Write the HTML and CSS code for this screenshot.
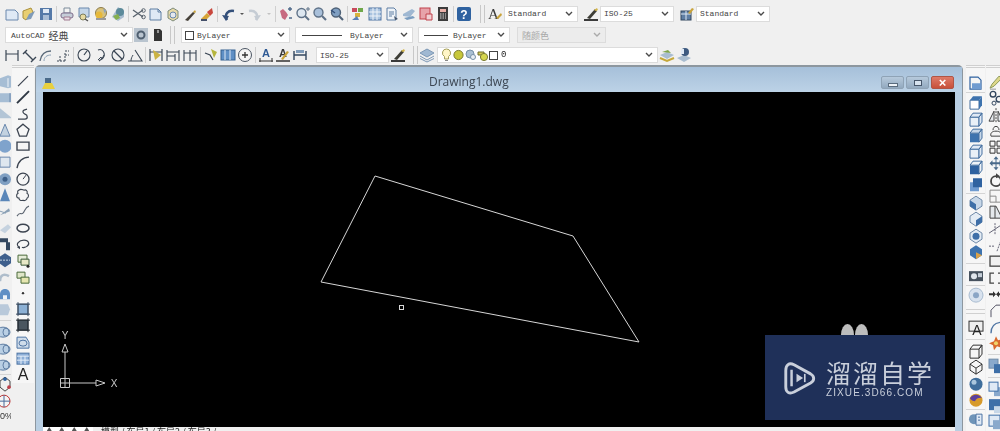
FILE: index.html
```html
<!DOCTYPE html>
<html lang="zh">
<head>
    <meta charset="UTF-8">
    <title>Drawing1.dwg</title>
    <link rel="stylesheet" href="styles.css">
</head>
<body>
    <svg class="defs" width="0" height="0">
        <symbol id="chev" viewBox="0 0 8 6"><path d="M1 1l3 3 3-3" fill="none" stroke="#4a4a4a" stroke-width="1.4"/></symbol>
        <symbol id="new" viewBox="0 0 16 16"><path d="M2 4h9l3 3v7H2z" fill="#dfe9f5" stroke="#6a88ad"/></symbol>
        <symbol id="open" viewBox="0 0 16 16"><path d="M2 5l8-3 2 4-7 8-3-2z" fill="#e9cf72" stroke="#a98f3c"/><path d="M8 8l6-3-4 8-5 1z" fill="#7f9bb9"/></symbol>
        <symbol id="docmark" viewBox="0 0 16 16"><path d="M5 3h6v5H5z" fill="#4a6a8a"/><path d="M2 14l3-6h7l3 6z" fill="#e8cf3f"/></symbol>
        <symbol id="save" viewBox="0 0 16 16"><rect x="2" y="2" width="12" height="12" fill="#5579a8"/><rect x="5" y="3" width="6" height="4" fill="#dfe9f5"/><rect x="5" y="9" width="6" height="5" fill="#a9bdd6"/></symbol>
        <symbol id="print" viewBox="0 0 16 16"><path d="M5 2h6v5H5z" fill="#f3f3f3" stroke="#7d8b9a"/><rect x="2" y="7" width="12" height="5" rx="2" fill="#c5cdd8" stroke="#7d6b8a"/><path d="M5 11h6v3H5z" fill="#eadfe8" stroke="#a07a90"/></symbol>
        <symbol id="preview" viewBox="0 0 16 16"><path d="M3 2h10v9H3z" fill="#c5d6e8" stroke="#6a88ad"/><circle cx="7" cy="11" r="3" fill="#e6d9a0" stroke="#7d7d5d"/><path d="M9 13l3 2" stroke="#555" stroke-width="1.4"/></symbol>
        <symbol id="publish" viewBox="0 0 16 16"><circle cx="8" cy="7" r="5.5" fill="#d9c27a" stroke="#8a7a4a"/><circle cx="6" cy="9" r="3.5" fill="#e6b83a"/><path d="M10 3l3 1-1 4z" fill="#8aa5c5"/><path d="M3 13h10" stroke="#9a9a9a" stroke-width="2"/></symbol>
        <symbol id="dwf" viewBox="0 0 16 16"><path d="M8 1l6 4v6l-6 4-6-4z" fill="#a9bdd0"/><circle cx="10" cy="6" r="4" fill="#5c8a9a"/><path d="M3 10l5-2 2 4-4 2z" fill="#86b04e"/></symbol>
        <symbol id="cut" viewBox="0 0 16 16"><path d="M2 4l10 7M2 11l10-7" stroke="#59636e" stroke-width="1.3"/><circle cx="12.5" cy="4.5" r="1.8" fill="none" stroke="#59636e"/><circle cx="12.5" cy="11" r="1.8" fill="none" stroke="#59636e"/></symbol>
        <symbol id="copy" viewBox="0 0 16 16"><path d="M2 3h8l3 3v8H2z" fill="#dfe9f5" stroke="#5f7ea3"/><path d="M10 3v3h3" fill="none" stroke="#5f7ea3"/></symbol>
        <symbol id="paste" viewBox="0 0 16 16"><path d="M3 5l5-3 5 3v7l-5 3-5-3z" fill="#e7d9a8" stroke="#7d8b7a"/><circle cx="8" cy="9" r="3" fill="#e4e8ee" stroke="#6a88ad"/></symbol>
        <symbol id="brush" viewBox="0 0 16 16"><path d="M3 14l8-8 2 1-7 8z" fill="#47423a"/><path d="M11 6l2-2 1 2-1 1z" fill="#c9a33a"/></symbol>
        <symbol id="block" viewBox="0 0 16 16"><path d="M2 13l6-6 3 3-4 4z" fill="#d6a437"/><path d="M8 6l5-4 1 5-3 3z" fill="#c8473c"/><path d="M2 14h6" stroke="#44506a" stroke-width="2"/></symbol>
        <symbol id="undo" viewBox="0 0 16 16"><path d="M7 14c-3-6 1-10 7-9" fill="none" stroke="#34507a" stroke-width="2.4"/><path d="M2 9l7 1-3 5z" fill="#34507a"/></symbol>
        <symbol id="redo" viewBox="0 0 16 16"><path d="M9 14c3-6-1-10-7-9" fill="none" stroke="#c5ccd4" stroke-width="2.4"/><path d="M14 9l-7 1 3 5z" fill="#c5ccd4"/></symbol>
        <symbol id="dot" viewBox="0 0 8 16"><path d="M2 7h4l-2 2z" fill="#555"/></symbol>
        <symbol id="dotoff" viewBox="0 0 8 16"><path d="M2 7h4l-2 2z" fill="#c2c2c2"/></symbol>
        <symbol id="pan" viewBox="0 0 16 16"><path d="M2 5l3-2 3 3 2 3-3 5-3-2z" fill="#c76a80"/><path d="M10 3h4M12 1v4M11 12h3" stroke="#4f6a8a" stroke-width="1.4"/></symbol>
        <symbol id="zoomp" viewBox="0 0 16 16"><circle cx="6.5" cy="7" r="4.5" fill="#dde7f0" stroke="#5f7288" stroke-width="1.4"/><path d="M10 10l4 4" stroke="#5f7288" stroke-width="2"/><path d="M11 3h4M13 1v4" stroke="#5f7288"/></symbol>
        <symbol id="zoomw" viewBox="0 0 16 16"><circle cx="6.5" cy="6.5" r="4.5" fill="#a9c0da" stroke="#5f7288" stroke-width="1.4"/><path d="M10 10l4 4" stroke="#5f7288" stroke-width="2.2"/></symbol>
        <symbol id="zoomb" viewBox="0 0 16 16"><circle cx="7" cy="6.5" r="4.5" fill="#7f9fc2" stroke="#4f6278" stroke-width="1.4"/><path d="M10 10l4 4" stroke="#4f6278" stroke-width="2.2"/><path d="M2 4l4 3" stroke="#34507a" stroke-width="1.4"/></symbol>
        <symbol id="props" viewBox="0 0 16 16"><rect x="2" y="2" width="5" height="4" fill="#c94b5c"/><rect x="8" y="2" width="5" height="4" fill="#6fa84a"/><rect x="5" y="7" width="5" height="4" fill="#d9b23c"/><path d="M2 14l5-4 2 4z" fill="#5a7fb5"/></symbol>
        <symbol id="grid" viewBox="0 0 16 16"><rect x="2" y="2" width="12" height="12" fill="#a9c3df" stroke="#4f75a4"/><path d="M6 2v12M10 2v12M2 6h12M2 10h12" stroke="#eef3f8"/></symbol>
        <symbol id="tools" viewBox="0 0 16 16"><path d="M3 2h7l2 2v10H3z" fill="#eef3f8" stroke="#5f7ea3"/><path d="M5 6h5M5 8h5M5 10h3" stroke="#5f7ea3"/><path d="M10 10l4 3-3 1z" fill="#44546a"/></symbol>
        <symbol id="sheet" viewBox="0 0 16 16"><path d="M2 8l9-5 3 2-5 6-7-1z" fill="#9fb8d2"/><path d="M3 12l9-2 2 2-8 2z" fill="#7a9dc0"/></symbol>
        <symbol id="markup" viewBox="0 0 16 16"><rect x="2" y="2" width="10" height="11" fill="#e7a3aa" stroke="#c0404a"/><path d="M8 8h6v6H8z" fill="#f0d0d4" stroke="#c0404a"/></symbol>
        <symbol id="calc" viewBox="0 0 16 16"><rect x="3" y="1" width="10" height="14" fill="#3c3c3c"/><rect x="5" y="3" width="6" height="3" fill="#e8b0a8"/><path d="M5 8h6M5 10h6M5 12h6" stroke="#ddd" stroke-dasharray="1.5 1"/></symbol>
        <symbol id="dimst" viewBox="0 0 16 16"><path d="M1 14h14" stroke="#3a3a3a" stroke-width="2"/><path d="M4 12l8-9 2 2-7 8z" fill="#3d3d36"/><path d="M11 4l3-2 1 2-2 1z" fill="#d3b54a"/></symbol>
        <symbol id="tblst" viewBox="0 0 16 16"><rect x="2" y="5" width="10" height="9" fill="#5f7ea3" stroke="#33475f"/><path d="M2 8h10M7 5v9" stroke="#dfe9f5"/><path d="M9 7l4-5 2 1-4 5z" fill="#c9a33a"/></symbol>
        <symbol id="wsgear" viewBox="0 0 16 16"><rect x="1" y="1" width="14" height="14" fill="#b9c4cf"/><circle cx="8" cy="8" r="3.5" fill="none" stroke="#4f5f70" stroke-width="2"/></symbol>
        <symbol id="wssave" viewBox="0 0 16 16"><path d="M4 2h6l2 2v10H4z" fill="#333"/><path d="M7 3h2v3H7z" fill="#999"/></symbol>
        <symbol id="dlin" viewBox="0 0 16 16"><path d="M2 3v11M14 3v11M2 7h12" fill="none" stroke="#3a4654" stroke-width="1.2"/></symbol>
        <symbol id="dali" viewBox="0 0 16 16"><path d="M2 7l4-4M10 15l5-5M4 5l8 8" fill="none" stroke="#3a4654" stroke-width="1.4"/></symbol>
        <symbol id="darc" viewBox="0 0 16 16"><path d="M2 14c1-6 5-10 11-10" fill="none" stroke="#5a6a7a" stroke-width="1.3"/><path d="M6 14c0-4 3-6 7-6" fill="none" stroke="#8aa0b5"/></symbol>
        <symbol id="dord" viewBox="0 0 16 16"><path d="M2 14h8M10 14V5M5 14V8M10 8h4M10 4h4" fill="none" stroke="#3a4654" stroke-dasharray="2 1"/></symbol>
        <symbol id="drad" viewBox="0 0 16 16"><circle cx="8" cy="8" r="6" fill="none" stroke="#3a4654" stroke-width="1.1"/><path d="M8 8l3-4" stroke="#3a4654" stroke-width="1.2"/></symbol>
        <symbol id="djog" viewBox="0 0 16 16"><path d="M5 3c5-2 8 4 5 8-1 1-3 2-4 3" fill="none" stroke="#3a4654" stroke-width="1.1"/><path d="M5 13l3-3 1 2 2-4" fill="none" stroke="#3a4654"/></symbol>
        <symbol id="ddia" viewBox="0 0 16 16"><circle cx="8" cy="8" r="6" fill="none" stroke="#3a4654" stroke-width="1.1"/><path d="M4 4l8 8" stroke="#3a4654" stroke-width="1.2"/></symbol>
        <symbol id="dang" viewBox="0 0 16 16"><path d="M1 14h14L8 3" fill="none" stroke="#3a4654" stroke-width="1.1"/><path d="M4 14c0-3 1-4 2-6" fill="none" stroke="#3a4654"/></symbol>
        <symbol id="dq" viewBox="0 0 16 16"><path d="M2 2v12M14 2v12M2 5h12" stroke="#3a4654" stroke-width="1.2"/><path d="M5 3l8 5-6 5z" fill="#cbb343"/></symbol>
        <symbol id="dbase" viewBox="0 0 16 16"><path d="M2 3v11M14 3v11M2 5h12M2 9h8M10 7v7" fill="none" stroke="#3a4654" stroke-width="1.1"/></symbol>
        <symbol id="dcont" viewBox="0 0 16 16"><path d="M2 3v11M8 3v11M14 3v11M2 6h12" fill="none" stroke="#3a4654" stroke-width="1.1"/></symbol>
        <symbol id="dlead" viewBox="0 0 16 16"><path d="M2 6l5 2 3 5" fill="none" stroke="#3a4654" stroke-width="1.3"/><path d="M8 2l6 3-3 6z" fill="#b5b53e"/></symbol>
        <symbol id="dtol" viewBox="0 0 16 16"><rect x="1" y="3" width="14" height="10" fill="#5f8fc5" stroke="#35608f"/><path d="M5 3v10M10 3v10" stroke="#dfe9f5"/></symbol>
        <symbol id="dcen" viewBox="0 0 16 16"><circle cx="8" cy="8" r="6.5" fill="#f4f4f4" stroke="#4a5462"/><path d="M5 8h6M8 5v6" stroke="#333" stroke-width="1.3"/></symbol>
        <symbol id="dup" viewBox="0 0 16 16"><path d="M2 4v9M14 4v9M2 8h12" stroke="#33475f" stroke-width="1.4"/><path d="M4 3h8v3H4z" fill="#7f9bb9"/></symbol>
        <symbol id="layers" viewBox="0 0 16 16"><path d="M1 6l7-4 7 4-7 4z" fill="#9fb8d2" stroke="#7c97b4"/><path d="M1 9l7 4 7-4M1 11.500l7 3.500 7-3.500" fill="none" stroke="#7c97b4"/></symbol>
        <symbol id="layprev" viewBox="0 0 16 16"><path d="M1 8l7-3 7 3-7 4z" fill="#a9bdd0"/><path d="M1 11l7 3 7-3" fill="none" stroke="#c5a83a" stroke-width="2"/><path d="M3 5l6-2 3 3" fill="#7ea54a"/></symbol>
        <symbol id="laystat" viewBox="0 0 16 16"><path d="M1 11l7-3 7 3-7 4z" fill="#a9bdd0"/><circle cx="9" cy="5" r="4" fill="#3d5a80"/><path d="M5 2h3v5H5z" fill="#dfe9f5"/></symbol>
        <symbol id="bulb" viewBox="0 0 11 14"><path d="M5.500 1a4 4 0 0 1 2 7.500V11h-4V8.500a4 4 0 0 1 2-7.500z" fill="#fff6c7" stroke="#a6a05c"/><path d="M4 12.500h3" stroke="#888"/></symbol>
        <symbol id="sun" viewBox="0 0 11 14"><circle cx="5.500" cy="7" r="4.600" fill="#c7c73a" stroke="#7c7c33"/></symbol>
        <symbol id="lock" viewBox="0 0 11 14"><circle cx="5" cy="6" r="4" fill="#a9bfd3" stroke="#7690a7"/><circle cx="8" cy="9" r="2.500" fill="#e8eef4" stroke="#7690a7"/></symbol>
        <symbol id="printl" viewBox="0 0 11 14"><path d="M1 4h6v3H1z" fill="#d6cc56" stroke="#6d6d33"/><circle cx="7" cy="9" r="3.600" fill="#d6d64e" stroke="#7c7c33"/></symbol>
        <symbol id="ln" viewBox="0 0 16 16"><path d="M3 13L13 3" stroke="#3c4450" stroke-width="1.3"/></symbol>
        <symbol id="xln" viewBox="0 0 16 16"><path d="M2 14L14 2" stroke="#2f3844" stroke-width="2"/></symbol>
        <symbol id="pln" viewBox="0 0 16 16"><path d="M3 13h7c3 0 3-4 0-5-2-1-3-3-1-4l3-1" fill="none" stroke="#3c4450" stroke-width="1.3"/></symbol>
        <symbol id="pgon" viewBox="0 0 16 16"><path d="M8 2l6 5-2.500 7h-7L2 7z" fill="none" stroke="#3c4450" stroke-width="1.3"/></symbol>
        <symbol id="rect" viewBox="0 0 16 16"><path d="M2 4h12v8H2z" fill="#f5f5f5" stroke="#3c4450" stroke-width="1.4"/></symbol>
        <symbol id="arc" viewBox="0 0 16 16"><path d="M2 14C3 7 8 3 14 3" fill="none" stroke="#3c4450" stroke-width="1.4"/></symbol>
        <symbol id="circ" viewBox="0 0 16 16"><circle cx="8" cy="8" r="6" fill="none" stroke="#3c4450" stroke-width="1.3"/><path d="M8 8l3-4" stroke="#3c4450"/></symbol>
        <symbol id="cloud" viewBox="0 0 16 16"><path d="M4 3c2-2 4 0 5 0 2-1 4 1 3 3 2 1 2 4 0 5 0 2-3 3-4 2-2 1-4 0-4-2-3 0-3-4-1-5-1-1 0-3 1-3z" fill="none" stroke="#3c4450" stroke-width="1.1"/></symbol>
        <symbol id="spl" viewBox="0 0 16 16"><path d="M2 13c3-5 4-1 6-3s2-6 6-7" fill="none" stroke="#5b6470" stroke-width="1.1"/></symbol>
        <symbol id="ell" viewBox="0 0 16 16"><ellipse cx="8" cy="8" rx="6" ry="3.800" fill="none" stroke="#3c4450" stroke-width="1.5"/></symbol>
        <symbol id="ella" viewBox="0 0 16 16"><path d="M4 11C0 8 4 4 9 4s6 4 3 6c-1 1-4 2-5 1" fill="none" stroke="#3c4450" stroke-width="1.2"/><path d="M2 11l3 2 0-3z" fill="#3c4450"/></symbol>
        <symbol id="ins" viewBox="0 0 16 16"><path d="M3 3h9v7H3z" fill="#e6ecd8" stroke="#4a6a3a"/><path d="M6 7h8v6H6z" fill="#e8e8c6" stroke="#3c5a3a"/><circle cx="13" cy="14" r="1.500" fill="#222"/></symbol>
        <symbol id="mkb" viewBox="0 0 16 16"><path d="M2 3h8v6H2z" fill="#dfe6c8" stroke="#4a6a3a"/><path d="M6 8h8v6H6z" fill="#e6e6b0" stroke="#4a6a3a"/></symbol>
        <symbol id="pt" viewBox="0 0 16 16"><circle cx="8" cy="8" r="1.200" fill="#333"/></symbol>
        <symbol id="hat" viewBox="0 0 16 16"><rect x="3" y="3" width="10" height="10" fill="#8cb0d4" stroke="#3a4d63"/><path d="M1 3h14M1 13h14M3 1v14M13 1v14" stroke="#3a4d63"/></symbol>
        <symbol id="grad" viewBox="0 0 16 16"><rect x="3" y="3" width="10" height="10" fill="#4a5660" stroke="#252d35"/><path d="M1 3h14M1 13h14M3 1v14M13 1v14" stroke="#252d35"/></symbol>
        <symbol id="reg" viewBox="0 0 16 16"><path d="M2 3h9l3 5v6H2z" fill="#cfdcea" stroke="#4f75a4"/><ellipse cx="8" cy="9" rx="4" ry="3" fill="none" stroke="#4f75a4"/></symbol>
        <symbol id="tbl" viewBox="0 0 16 16"><rect x="2" y="3" width="12" height="11" fill="#8fb0d8" stroke="#4f75a4"/><path d="M2 6h12M6 6v8M10 6v8M2 10h12" stroke="#e6eef8"/></symbol>
        <symbol id="s1" viewBox="0 0 16 16"><path d="M0 5l8-3 8 3v8l-8 2-8-2z" fill="#a6bdd4"/><path d="M8 5v9" stroke="#eef3f8"/></symbol>
        <symbol id="s2" viewBox="0 0 16 16"><path d="M0 4h14v9H0z" fill="#a6bdd4"/><path d="M10 4v9" stroke="#6a88ad"/></symbol>
        <symbol id="s3" viewBox="0 0 16 16"><path d="M0 2l12 10H0z" fill="#b3c5d6"/></symbol>
        <symbol id="s4" viewBox="0 0 16 16"><path d="M5 2l5 12H0z" fill="#c3d2e0" stroke="#6a88ad"/></symbol>
        <symbol id="s5" viewBox="0 0 16 16"><circle cx="5" cy="8" r="6.500" fill="#7fa3cc"/></symbol>
        <symbol id="s6" viewBox="0 0 16 16"><path d="M0 3h10v10H0z" fill="#dfe7ef" stroke="#6a88ad"/></symbol>
        <symbol id="s7" viewBox="0 0 16 16"><circle cx="5" cy="8" r="6" fill="#7f9fc2"/><circle cx="5" cy="8" r="2.500" fill="#3d5f88"/></symbol>
        <symbol id="s8" viewBox="0 0 16 16"><path d="M5 1l5 13H0z" fill="#5a86b8"/></symbol>
        <symbol id="s9" viewBox="0 0 16 16"><path d="M0 12l9-7 1 3z" fill="#8aa0b5"/><path d="M0 8l6 2" stroke="#8aa0b5"/></symbol>
        <symbol id="s10" viewBox="0 0 16 16"><path d="M0 10l8-6 3 3-6 6z" fill="#c5d2df"/></symbol>
        <symbol id="s11" viewBox="0 0 16 16"><path d="M0 2h8v4h2v8H6V6H0z" fill="#33475f"/></symbol>
        <symbol id="s12" viewBox="0 0 16 16"><path d="M5 1l6 4v6l-6 4-6-4V5z" fill="#3e5f8c"/><path d="M0 8h10" stroke="#c5d2df" stroke-dasharray="2 1"/></symbol>
        <symbol id="s13" viewBox="0 0 16 16"><path d="M0 12C0 6 4 4 9 7" fill="none" stroke="#aebdcb" stroke-width="2.500"/></symbol>
        <symbol id="s14" viewBox="0 0 16 16"><path d="M0 9c0-7 10-7 10 0v5H0z" fill="#5f8fc5"/><path d="M3 10h4v4H3z" fill="#eef3f8"/></symbol>
        <symbol id="s15" viewBox="0 0 16 16"><path d="M0 3h8l2 5-2 6H0z" fill="#b9c9da"/></symbol>
        <symbol id="s16" viewBox="0 0 16 16"><ellipse cx="3" cy="8" rx="7" ry="5" fill="#b9cfe4" stroke="#5f7ea3"/><ellipse cx="6" cy="8" rx="3" ry="4" fill="none" stroke="#5f7ea3"/></symbol>
        <symbol id="s17" viewBox="0 0 16 16"><path d="M5 1l5 4v6l-5 4-5-4V5z" fill="none" stroke="#444"/><circle cx="5" cy="3" r="1.800" fill="#2f62a0"/><circle cx="9" cy="11" r="1.800" fill="#c0404a"/></symbol>
        <symbol id="s18" viewBox="0 0 16 16"><circle cx="4" cy="8" r="6" fill="#f5f5f5" stroke="#b33"/><path d="M4 2v12M-2 8h12" stroke="#4a6a9a"/></symbol>
        <symbol id="r1" viewBox="0 0 16 16"><path d="M2 2h8l3 3v9H2z" fill="#f5f5f5" stroke="#2f62a0" stroke-width="1.2"/><path d="M4 8h9v6H4z" fill="#6f9bd0"/></symbol>
        <symbol id="bx1" viewBox="0 0 16 16"><path d="M2 6h9v9H2z" fill="#fff" stroke="#446f9f"/><path d="M2 6l3-4h9l-3 4z" fill="#3e73ae"/><path d="M11 6l3-4v9l-3 4z" fill="#3e73ae"/></symbol>
        <symbol id="bx2" viewBox="0 0 16 16"><path d="M2 6h9v9H2z" fill="#e9f0f7" stroke="#446f9f"/><path d="M2 6l3-4h9l-3 4zM11 6l3-4v9l-3 4z" fill="#dfe9f5" stroke="#446f9f"/></symbol>
        <symbol id="bx3" viewBox="0 0 16 16"><path d="M2 6h9v9H2z" fill="#3e73ae"/><path d="M2 6l3-4h9l-3 4zM11 6l3-4v9l-3 4z" fill="#c7d7e8" stroke="#446f9f"/></symbol>
        <symbol id="bx4" viewBox="0 0 16 16"><path d="M2 6h9v9H2z" fill="#2f62a0"/><path d="M2 6l3-4h9l-3 4zM11 6l3-4v9l-3 4z" fill="#eef3f8" stroke="#446f9f"/></symbol>
        <symbol id="bx5" viewBox="0 0 16 16"><path d="M2 6h9v9H2z" fill="#6f9bd0"/><path d="M5 2h9v9H5z" fill="#2f62a0"/></symbol>
        <symbol id="hx1" viewBox="0 0 16 16"><path d="M8 1l6 4v6l-6 4-6-4V5z" fill="#c7d7e8" stroke="#6f8aa8"/><path d="M2 5l6 4v6l-6-4z" fill="#3e6fa8"/></symbol>
        <symbol id="hx2" viewBox="0 0 16 16"><path d="M8 1l6 4v6l-6 4-6-4V5z" fill="#e4ecf4" stroke="#6f8aa8"/><path d="M8 9l6-4v6l-6 4z" fill="#3e6fa8"/></symbol>
        <symbol id="hx3" viewBox="0 0 16 16"><path d="M8 1l6 4v6l-6 4-6-4V5z" fill="#e4ecf4" stroke="#6f8aa8"/><circle cx="8" cy="8" r="3.500" fill="#3e6fa8"/></symbol>
        <symbol id="hx4" viewBox="0 0 16 16"><path d="M8 1l6 4v6l-6 4-6-4V5z" fill="#3e73ae"/><path d="M8 8l6 3-6 4z" fill="#d9a24a"/></symbol>
        <symbol id="cam" viewBox="0 0 16 16"><rect x="1" y="4" width="14" height="10" fill="#47525e"/><circle cx="6" cy="9" r="3" fill="#e0e6ec"/><rect x="10" y="6" width="4" height="4" fill="#c5ced8"/></symbol>
        <symbol id="tgt" viewBox="0 0 16 16"><circle cx="8" cy="8" r="7" fill="#d8e2ee" stroke="#a9bcd0"/><circle cx="8" cy="8" r="3" fill="#8aa5c5"/></symbol>
        <symbol id="wire" viewBox="0 0 16 16"><path d="M2 6h9v9H2zM2 6l3-4h9l-3 4M11 6l3-4v9l-3 4" fill="none" stroke="#333"/></symbol>
        <symbol id="hexw" viewBox="0 0 16 16"><path d="M8 1l6 4v6l-6 4-6-4V5zM2 5l6 4 6-4M8 9v6" fill="none" stroke="#333"/></symbol>
        <symbol id="ball" viewBox="0 0 16 16"><circle cx="8" cy="8" r="6.500" fill="#3f6e9c"/><circle cx="6" cy="6" r="2.500" fill="#a9c6dd"/></symbol>
        <symbol id="mat" viewBox="0 0 16 16"><circle cx="8" cy="8" r="6.500" fill="#d79a2a"/><path d="M2 6a7 7 0 0 1 12 0c-2-1-6 0-7 3-2 0-4-1-5-3z" fill="#5a3f9c"/></symbol>
        <symbol id="lt" viewBox="0 0 16 16"><circle cx="6" cy="8" r="5" fill="#6f94b8"/><path d="M8 3h6v11H8z" fill="#dfe9f5" stroke="#4f75a4"/><path d="M10 6h2M10 9h2" stroke="#4f75a4"/></symbol>
        <symbol id="pencil" viewBox="0 0 16 16"><path d="M2 14l2-4 7-8 3 2-8 8z" fill="#dfd88a" stroke="#8d9a5a"/><path d="M2 15h6" stroke="#999"/></symbol>
        <symbol id="links" viewBox="0 0 16 16"><circle cx="5" cy="4" r="2.800" fill="none" stroke="#33475f" stroke-width="1.4"/><circle cx="11" cy="9" r="2.800" fill="none" stroke="#33475f" stroke-width="1.4"/><circle cx="6" cy="13" r="2" fill="none" stroke="#33475f"/></symbol>
        <symbol id="mirr" viewBox="0 0 16 16"><path d="M8 1v14" stroke="#444" stroke-dasharray="2 1"/><path d="M6 4v10H1zM10 4v10h5z" fill="#e4e8ec" stroke="#444"/></symbol>
        <symbol id="off" viewBox="0 0 16 16"><path d="M3 13c-1-3 1-5 5-5s6 2 5 5z" fill="#f5f5f5" stroke="#444"/><path d="M5 7c0-5 6-5 6 0" fill="none" stroke="#444"/></symbol>
        <symbol id="arr" viewBox="0 0 16 16"><path d="M2 2h5v5H2zM9 2h5v5H9zM2 9h5v5H2zM9 9h5v5H9z" fill="#f5f5f5" stroke="#333"/></symbol>
        <symbol id="mv" viewBox="0 0 16 16"><path d="M8 1l2.500 3h-2v3h3V5l3 3-3 3V9h-3v3h2L8 15l-2.500-3h2V9h-3v2l-3-3 3-3v2h3V4h-2z" fill="#4a6a8a"/></symbol>
        <symbol id="rot" viewBox="0 0 16 16"><circle cx="8" cy="9" r="5" fill="none" stroke="#444" stroke-width="1.800"/><path d="M8 1l4 3-4 2z" fill="#444"/></symbol>
        <symbol id="sca" viewBox="0 0 16 16"><path d="M2 2h12v12H2zM2 8h6v6" fill="none" stroke="#8a8a8a"/></symbol>
        <symbol id="str" viewBox="0 0 16 16"><path d="M2 2h6l6 12H2z" fill="#e4e8ec" stroke="#444"/><path d="M7 2v12" stroke="#444"/></symbol>
        <symbol id="trm" viewBox="0 0 16 16"><path d="M1 12l12-8" stroke="#667" /><path d="M7 2v12" stroke="#667" stroke-dasharray="2 1"/></symbol>
        <symbol id="ext" viewBox="0 0 16 16"><path d="M1 9h6M9 14l4-11" stroke="#667" stroke-dasharray="2 1"/></symbol>
        <symbol id="brk" viewBox="0 0 16 16"><rect x="2" y="3" width="12" height="10" fill="#f0f0f0" stroke="#444" stroke-width="1.300"/></symbol>
        <symbol id="brk2" viewBox="0 0 16 16"><path d="M6 3H2v10h4M10 3h4v10h-4" fill="none" stroke="#444" stroke-width="1.300"/></symbol>
        <symbol id="join" viewBox="0 0 16 16"><path d="M1 8h4M11 8h4" stroke="#333" stroke-width="2"/><path d="M5 5l3 3-3 3zM11 5L8 8l3 3z" fill="#333"/></symbol>
        <symbol id="chm" viewBox="0 0 16 16"><path d="M3 15V8l5-5h7" fill="none" stroke="#556"/></symbol>
        <symbol id="fil" viewBox="0 0 16 16"><path d="M3 15C3 8 7 4 15 4" fill="none" stroke="#4f75a4" stroke-width="1.400"/></symbol>
        <symbol id="expl" viewBox="0 0 16 16"><path d="M8 1l2 4 5-1-3 4 3 5-6-2-3 4-1-5-4-2 5-2z" fill="#d9692f"/><circle cx="8" cy="8" r="2" fill="#f0d36a"/></symbol>
        <symbol id="ov1" viewBox="0 0 16 16"><rect x="1" y="1" width="9" height="9" fill="#8aa9cc" stroke="#6f8aa8"/><rect x="6" y="6" width="9" height="9" fill="#3e6fa8"/></symbol>
        <symbol id="ov2" viewBox="0 0 16 16"><rect x="6" y="6" width="9" height="9" fill="#8aa9cc"/><rect x="1" y="1" width="9" height="9" fill="#dfe9f5" stroke="#3e6fa8"/></symbol>
        <symbol id="ov3" viewBox="0 0 16 16"><rect x="1" y="1" width="11" height="11" fill="#3e6fa8"/><rect x="6" y="8" width="9" height="7" fill="#c7d7e8"/></symbol>
        <symbol id="ov4" viewBox="0 0 16 16"><rect x="1" y="1" width="11" height="11" fill="#dfe9f5" stroke="#3e6fa8"/><rect x="5" y="6" width="10" height="9" fill="#8aa9cc"/></symbol>
    </svg>

    <header class="toolbars">
        <div class="bar bar-std">
            <svg class="ic"><use href="#new"/></svg><svg class="ic"><use href="#open"/></svg><svg class="ic"><use href="#save"/></svg>
            <i class="sep"></i>
            <svg class="ic"><use href="#print"/></svg><svg class="ic"><use href="#preview"/></svg><svg class="ic"><use href="#publish"/></svg><svg class="ic"><use href="#dwf"/></svg>
            <i class="sep"></i>
            <svg class="ic"><use href="#cut"/></svg><svg class="ic"><use href="#copy"/></svg><svg class="ic"><use href="#paste"/></svg><svg class="ic"><use href="#brush"/></svg><svg class="ic"><use href="#block"/></svg>
            <i class="sep"></i>
            <svg class="ic"><use href="#undo"/></svg><svg class="ic-dd"><use href="#dot"/></svg><svg class="ic"><use href="#redo"/></svg><svg class="ic-dd"><use href="#dotoff"/></svg>
            <i class="sep"></i>
            <svg class="ic"><use href="#pan"/></svg><svg class="ic"><use href="#zoomp"/></svg><svg class="ic"><use href="#zoomw"/></svg><svg class="ic"><use href="#zoomb"/></svg>
            <i class="sep"></i>
            <svg class="ic"><use href="#props"/></svg><svg class="ic"><use href="#grid"/></svg><svg class="ic"><use href="#tools"/></svg><svg class="ic"><use href="#sheet"/></svg><svg class="ic"><use href="#markup"/></svg><svg class="ic"><use href="#calc"/></svg>
            <i class="sep"></i>
            <svg class="ic ic-help" viewBox="0 0 16 16"><rect x="1" y="1" width="14" height="14" rx="2" fill="#2f62a0"/><text x="8" y="13" text-anchor="middle">?</text></svg>
            <i class="grip grip-std"></i>
            <svg class="ic ic-glyph" viewBox="0 0 16 16"><text x="1" y="13">A</text><path d="M9 12l5-5 1 2-4 4z" fill="#c9a33a"/></svg>
            <div class="combo combo-style"><span>Standard</span><svg class="chev"><use href="#chev"/></svg></div>
            <svg class="ic"><use href="#dimst"/></svg>
            <div class="combo combo-style"><span>ISO-25</span><svg class="chev"><use href="#chev"/></svg></div>
            <svg class="ic"><use href="#tblst"/></svg>
            <div class="combo combo-style"><span>Standard</span><svg class="chev"><use href="#chev"/></svg></div>
        </div>

        <div class="bar bar-props">
            <div class="combo combo-ws"><span>AutoCAD <em class="cjk">经典</em></span><svg class="chev"><use href="#chev"/></svg></div>
            <svg class="ic"><use href="#wsgear"/></svg><svg class="ic"><use href="#wssave"/></svg>
            <i class="grip grip-props"></i>
            <div class="combo combo-color"><span><b class="swatch"></b>ByLayer</span><svg class="chev"><use href="#chev"/></svg></div>
            <div class="combo combo-line"><span><b class="lineprev"></b>ByLayer</span><svg class="chev"><use href="#chev"/></svg></div>
            <div class="combo combo-weight"><span><b class="lineprev lineprev-short"></b>ByLayer</span><svg class="chev"><use href="#chev"/></svg></div>
            <div class="combo combo-off"><span>随颜色</span><svg class="chev"><use href="#chev"/></svg></div>
        </div>

        <div class="bar bar-dim">
            <svg class="ic"><use href="#dlin"/></svg><svg class="ic"><use href="#dali"/></svg><svg class="ic"><use href="#darc"/></svg><svg class="ic"><use href="#dord"/></svg>
            <i class="sep"></i>
            <svg class="ic"><use href="#drad"/></svg><svg class="ic"><use href="#djog"/></svg><svg class="ic"><use href="#ddia"/></svg><svg class="ic"><use href="#dang"/></svg>
            <i class="sep"></i>
            <svg class="ic"><use href="#dq"/></svg><svg class="ic"><use href="#dbase"/></svg><svg class="ic"><use href="#dcont"/></svg>
            <i class="sep"></i>
            <svg class="ic"><use href="#dlead"/></svg><svg class="ic"><use href="#dtol"/></svg><svg class="ic"><use href="#dcen"/></svg>
            <i class="sep"></i>
            <svg class="ic ic-dimtext" viewBox="0 0 16 16"><text x="8" y="10" text-anchor="middle">A</text><path d="M1 14h14M2 11v4M14 11v4" stroke="#333"/></svg>
            <svg class="ic ic-dimtext ic-dimtext-dark" viewBox="0 0 16 16"><text x="8" y="10" text-anchor="middle">A</text><path d="M1 14h14" stroke="#333" stroke-width="1.500"/><path d="M6 12l6-8 2 1-6 8z" fill="#c9a33a"/></svg>
            <svg class="ic"><use href="#dup"/></svg>
            <div class="combo combo-dim"><span>ISO-25</span><svg class="chev"><use href="#chev"/></svg></div>
            <svg class="ic"><use href="#dimst"/></svg>
            <i class="grip grip-dim"></i>
            <svg class="ic"><use href="#layers"/></svg>
            <div class="combo combo-layer">
                <span class="layer-state"><svg class="ic-layer"><use href="#bulb"/></svg><svg class="ic-layer"><use href="#sun"/></svg><svg class="ic-layer"><use href="#lock"/></svg><svg class="ic-layer"><use href="#printl"/></svg><b class="swatch"></b>0</span>
                <svg class="chev"><use href="#chev"/></svg>
            </div>
            <svg class="ic"><use href="#layprev"/></svg><svg class="ic"><use href="#laystat"/></svg>
        </div>
    </header>

    <main class="workspace">
        <aside class="side side-left">
            <div class="col col-clip">
                <svg class="ic"><use href="#s1"/></svg><svg class="ic"><use href="#s2"/></svg><svg class="ic"><use href="#s3"/></svg><svg class="ic"><use href="#s4"/></svg><svg class="ic"><use href="#s5"/></svg><svg class="ic"><use href="#s6"/></svg><svg class="ic"><use href="#s7"/></svg><svg class="ic"><use href="#s8"/></svg><svg class="ic"><use href="#s9"/></svg><svg class="ic"><use href="#s10"/></svg><svg class="ic"><use href="#s11"/></svg><svg class="ic"><use href="#s12"/></svg><svg class="ic"><use href="#s13"/></svg><svg class="ic"><use href="#s14"/></svg><svg class="ic"><use href="#s15"/></svg>
                <i class="hsep hsep-lg"></i>
                <svg class="ic"><use href="#s16"/></svg><svg class="ic"><use href="#s16"/></svg><svg class="ic"><use href="#s16"/></svg>
                <i class="hsep"></i>
                <svg class="ic"><use href="#s17"/></svg><svg class="ic"><use href="#s18"/></svg>
                <span class="percent">0%</span>
            </div>
            <div class="col col-draw">
                <svg class="ic"><use href="#ln"/></svg><svg class="ic"><use href="#xln"/></svg><svg class="ic"><use href="#pln"/></svg><svg class="ic"><use href="#pgon"/></svg><svg class="ic"><use href="#rect"/></svg><svg class="ic"><use href="#arc"/></svg><svg class="ic"><use href="#circ"/></svg><svg class="ic"><use href="#cloud"/></svg><svg class="ic"><use href="#spl"/></svg><svg class="ic"><use href="#ell"/></svg><svg class="ic"><use href="#ella"/></svg><svg class="ic"><use href="#ins"/></svg><svg class="ic"><use href="#mkb"/></svg><svg class="ic"><use href="#pt"/></svg><svg class="ic"><use href="#hat"/></svg><svg class="ic"><use href="#grad"/></svg><svg class="ic"><use href="#reg"/></svg><svg class="ic"><use href="#tbl"/></svg>
                <span class="text-tool">A</span>
            </div>
        </aside>

        <section class="window">
            <div class="titlebar">
                <svg class="ic doc-ic"><use href="#docmark"/></svg>
                <span class="title">Drawing1.dwg</span>
                <div class="winbtns">
                    <span class="winbtn"><b class="glyph-min"></b></span>
                    <span class="winbtn"><b class="glyph-max"></b></span>
                    <span class="winbtn winbtn-close">×</span>
                </div>
            </div>
            <div class="canvas">
                <svg class="drawing" viewBox="43 92 912 335">
                    <path d="M375 176L573 236 639 342 321 282z" fill="none" stroke="#d6d6d6"/>
                    <rect x="399.500" y="305.500" width="4" height="4" fill="none" stroke="#d6d6d6"/>
                    <g fill="none" stroke="#c8c8c8">
                        <path d="M65 378V352M70 383H96"/>
                        <path d="M60.500 378.500h9v9h-9zM65 378.500v9M60.500 383h9"/>
                        <path d="M62 352l3-8 3 8zM96 380l9 3-9 3z"/>
                    </g>
                    <text x="65" y="339" class="ucs-label" text-anchor="middle">Y</text>
                    <text x="114" y="387" class="ucs-label" text-anchor="middle">X</text>
                </svg>
                <div class="ears"><i></i><i></i></div>
                <div class="watermark">
                    <svg class="wm-logo" viewBox="0 0 46 46">
                        <path d="M7 14c0-7 4-10 10-7l20 11c5 3 5 8 0 11L17 40c-6 3-10 0-10-6z" fill="none" stroke="#c9cfdb" stroke-width="3.500"/>
                        <path d="M14 13v20" stroke="#c9cfdb" stroke-width="3"/>
                        <path d="M20 18l8 5-8 5z" fill="#c9cfdb"/>
                        <path d="M30 18v10" stroke="#c9cfdb" stroke-width="2"/>
                    </svg>
                    <div class="wm-text">
                        <span class="wm-cn">溜溜自学</span>
                        <span class="wm-en">ZIXUE.3D66.COM</span>
                    </div>
                </div>
            </div>
            <div class="tabs">
                <span class="tabnav"><b></b><b></b><b></b><b></b></span>
                <span class="tablist">模型 / 布局1 / 布局2 / 布局3 /</span>
            </div>
        </section>

        <aside class="side side-right">
            <div class="col col-mid">
                <svg class="ic"><use href="#r1"/></svg>
                <i class="hsep"></i>
                <svg class="ic"><use href="#bx1"/></svg><svg class="ic"><use href="#bx2"/></svg><svg class="ic"><use href="#bx3"/></svg><svg class="ic"><use href="#bx2"/></svg><svg class="ic"><use href="#bx4"/></svg><svg class="ic"><use href="#bx5"/></svg>
                <i class="hsep"></i>
                <svg class="ic"><use href="#hx1"/></svg><svg class="ic"><use href="#hx2"/></svg><svg class="ic"><use href="#hx3"/></svg><svg class="ic"><use href="#hx4"/></svg>
                <i class="hsep hsep-lg"></i>
                <svg class="ic"><use href="#cam"/></svg>
                <i class="hsep"></i>
                <svg class="ic"><use href="#tgt"/></svg>
                <i class="hsep hsep-wide"></i>
                <svg class="ic ic-titled" viewBox="0 0 16 16"><rect x="1" y="1" width="14" height="10" fill="#eee" stroke="#333"/><text x="9" y="15" text-anchor="middle">A</text></svg>
                <i class="hsep hsep-lg"></i>
                <svg class="ic"><use href="#wire"/></svg><svg class="ic"><use href="#hexw"/></svg><svg class="ic"><use href="#ball"/></svg><svg class="ic"><use href="#mat"/></svg>
                <i class="hsep"></i>
                <svg class="ic"><use href="#lt"/></svg>
            </div>
            <div class="col col-edit">
                <svg class="ic"><use href="#pencil"/></svg><svg class="ic"><use href="#links"/></svg><svg class="ic"><use href="#mirr"/></svg><svg class="ic"><use href="#off"/></svg><svg class="ic"><use href="#arr"/></svg><svg class="ic"><use href="#mv"/></svg><svg class="ic"><use href="#rot"/></svg><svg class="ic"><use href="#sca"/></svg><svg class="ic"><use href="#str"/></svg><svg class="ic"><use href="#trm"/></svg><svg class="ic"><use href="#ext"/></svg><svg class="ic"><use href="#brk"/></svg><svg class="ic"><use href="#brk2"/></svg><svg class="ic"><use href="#join"/></svg><svg class="ic"><use href="#chm"/></svg><svg class="ic"><use href="#fil"/></svg><svg class="ic"><use href="#expl"/></svg>
                <i class="hsep hsep-lg"></i>
                <svg class="ic"><use href="#ov1"/></svg>
                <i class="hsep hsep-lg"></i>
                <svg class="ic"><use href="#ov2"/></svg><svg class="ic"><use href="#ov3"/></svg><svg class="ic"><use href="#ov4"/></svg>
            </div>
        </aside>
    </main>
</body>
</html>
```

FILE: styles.css
```css
html, body {
    margin: 0;
    height: 100%;
    overflow: hidden;
}
body {
    width: 1000px;
    height: 431px;
    background-color: #f0f0f0;
    font-family: 'Liberation Mono', 'Noto Sans CJK SC', monospace;
    display: flex;
    flex-direction: column;
}
.defs {
    position: absolute;
}
.ic {
    width: 16px;
    height: 16px;
    flex: none;
    margin-right: 1px;
}
.ic-dd {
    width: 8px;
    height: 16px;
    flex: none;
    margin: 0 1px;
}
.ic-help text {
    font: bold 12px 'Liberation Sans', sans-serif;
    fill: #fff;
}
.ic-glyph text {
    font: 15px 'Liberation Serif', serif;
    fill: #3a3a3a;
}
.ic-dimtext text {
    font: bold 11px 'Liberation Sans', sans-serif;
    fill: #2f5a94;
}
.ic-dimtext-dark text {
    fill: #3a3a3a;
}
.ic-titled text {
    font: 14px 'Liberation Sans', sans-serif;
    fill: #222;
}
.toolbars {
    height: 65px;
    flex: none;
    display: flex;
    flex-direction: column;
    filter: blur(0.3px);
}
.bar {
    display: flex;
    align-items: center;
}
.bar-std {
    height: 22px;
    padding: 3px 0 0 4px;
}
.bar-props {
    height: 20px;
    padding: 1px 0 0 5px;
}
.bar-dim {
    height: 20px;
    padding-left: 4px;
}
.sep {
    width: 1px;
    height: 16px;
    background-color: #cfcfcf;
    margin: 0 2px 0 1px;
    flex: none;
}
.grip {
    flex: none;
    height: 18px;
    width: 3px;
    border-left: 1px solid #c8c8c8;
    border-right: 1px solid #c8c8c8;
}
.grip-std {
    margin: 0 2px 0 7px;
}
.grip-props {
    margin: 0 6px 0 3px;
}
.grip-dim {
    margin: 0 1px 0 6px;
}
.combo {
    box-sizing: border-box;
    height: 16px;
    flex: none;
    background-color: #fff;
    border: 1px solid #dcdcdc;
    font-size: 8px;
    color: #444;
    display: flex;
    align-items: center;
    justify-content: space-between;
    padding: 0 4px 0 3px;
    margin-right: 5px;
}
.combo span {
    display: flex;
    align-items: center;
    white-space: nowrap;
}
.cjk {
    font-family: 'Noto Sans CJK SC', sans-serif;
    font-style: normal;
    font-size: 10px;
    margin-left: 4px;
}
.chev {
    width: 8px;
    height: 6px;
    flex: none;
}
.combo-style {
    width: 74px;
}
.combo-ws {
    width: 128px;
    padding-left: 5px;
    margin-right: 0;
}
.combo-color {
    width: 109px;
}
.combo-line {
    width: 118px;
}
.combo-line span {
    margin-left: 1px;
}
.combo-weight {
    width: 92px;
    margin-right: 7px;
}
.combo-off {
    width: 89px;
    background-color: #ececec;
    color: #a8a8a8;
    font-family: 'Noto Sans CJK SC', sans-serif;
    font-size: 9px;
    padding-left: 4px;
}
.combo-off .chev {
    opacity: 0.4;
}
.combo-dim {
    width: 73px;
    margin-left: 7px;
    margin-right: 1px;
}
.combo-layer {
    width: 221px;
    margin-left: 1px;
    margin-right: 1px;
}
.layer-state {
    color: #222;
    font-size: 9px;
}
.ic-layer {
    width: 11px;
    height: 14px;
    margin-right: 1px;
}
.swatch {
    display: inline-block;
    width: 7px;
    height: 7px;
    border: 1px solid #444;
    background-color: #fff;
    margin-right: 3px;
}
.lineprev {
    display: inline-block;
    width: 40px;
    height: 1px;
    background-color: #444;
    margin: 0 8px 0 2px;
}
.lineprev-short {
    width: 24px;
    margin-right: 5px;
}
.workspace {
    flex: 1;
    display: grid;
    grid-template-columns: 35px 928px 37px;
    min-height: 0;
}
.side {
    display: flex;
    overflow: hidden;
    filter: blur(0.3px);
}
.col {
    display: flex;
    flex-direction: column;
    align-items: center;
    padding-top: 8px;
    box-sizing: border-box;
}
.col .ic {
    margin-right: 0;
    flex: none;
    height: 16.3px;
}
.col-clip {
    width: 11px;
    align-items: flex-start;
    overflow: hidden;
}
.percent {
    font: 9px 'Liberation Sans', sans-serif;
    color: #333;
    line-height: 14px;
}
.col-draw {
    width: 22px;
    height: 318px;
    margin-left: 1px;
    background-color: #f6f6f6;
    border-top: 3px double #cfcfcf;
    padding-top: 5px;
}
.text-tool {
    font: 16px/18px 'Liberation Sans', sans-serif;
    color: #222;
}
.hsep {
    flex: none;
    width: 100%;
    height: 1px;
    background-color: #d4d4d4;
    margin: 1px 0;
}
.hsep-lg {
    margin: 3px 0;
}
.hsep-wide {
    height: 3px;
    border-top: 1px solid #d0d0d0;
    border-bottom: 1px solid #d0d0d0;
    background: none;
    margin: 6px 0;
}
.side-right {
    padding-left: 3px;
    gap: 1px;
}
.col-mid, .col-edit {
    background-color: #f6f6f6;
    border-top: 3px double #cfcfcf;
    padding-top: 7px;
}
.col-mid {
    width: 19px;
}
.col-edit {
    width: 14px;
    align-items: flex-start;
    padding-left: 2px;
    padding-top: 6px;
    overflow: hidden;
}
.window {
    display: flex;
    flex-direction: column;
    position: relative;
    box-sizing: border-box;
    padding: 0 7px;
    background-color: #b9cfe3;
    border-top: 2px solid #8d979f;
    border-left: 1px solid #8d979f;
    border-right: 1px solid #8d979f;
    border-top-left-radius: 5px;
    border-top-right-radius: 5px;
    min-height: 0;
}
.titlebar {
    height: 25px;
    flex: none;
    margin: 0 -7px;
    padding: 0 8px 0 4px;
    background: linear-gradient(#a6c0da, #bcd2e6);
    display: flex;
    align-items: center;
    position: relative;
}
.doc-ic {
    margin-top: 6px;
}
.title {
    position: absolute;
    left: 393px;
    top: 6px;
    font-family: 'Open Sans', sans-serif;
    font-size: 12px;
    color: #3c4652;
}
.winbtns {
    margin-left: auto;
    display: flex;
    gap: 2px;
    margin-top: 6px;
}
.winbtn {
    width: 23px;
    height: 13px;
    box-sizing: border-box;
    border: 1px solid #8fa3b6;
    border-radius: 2px;
    background: linear-gradient(#b7cadc, #92a9bf);
    display: flex;
    align-items: center;
    justify-content: center;
}
.winbtn-close {
    background: linear-gradient(#de7a68, #c8503a);
    border-color: #b05545;
    color: #fff;
    font: bold 13px 'Liberation Sans', sans-serif;
}
.glyph-min {
    width: 8px;
    height: 2px;
    margin-top: 4px;
    background-color: #eef3f8;
    border: 1px solid #5a6c7e;
}
.glyph-max {
    width: 6px;
    height: 4px;
    border: 1px solid #46566a;
    background-color: #d6e2ee;
}
.canvas {
    flex: 1;
    background-color: #000;
    position: relative;
    overflow: hidden;
    min-height: 0;
}
.drawing {
    display: block;
    width: 912px;
    height: 335px;
}
.ucs-label {
    font-family: 'Liberation Sans', sans-serif;
    font-size: 10px;
    fill: #c8c8c8;
}
.ears {
    position: absolute;
    left: 798px;
    top: 232px;
    display: flex;
    gap: 1px;
}
.ears i {
    display: block;
    width: 13px;
    height: 22px;
    background-color: #bdbdbd;
    border-radius: 50%;
}
.watermark {
    position: absolute;
    left: 722px;
    top: 243px;
    width: 180px;
    height: 85px;
    background-color: #1f3059;
    display: flex;
    align-items: center;
    padding-left: 15px;
    box-sizing: border-box;
    gap: 8px;
}
.wm-logo {
    width: 38px;
    height: 38px;
    flex: none;
}
.wm-text {
    display: flex;
    flex-direction: column;
    gap: 1px;
    color: #c9cfdb;
}
.wm-cn {
    font-family: 'Noto Sans CJK SC', sans-serif;
    font-size: 25px;
    line-height: 28px;
    letter-spacing: 2px;
    white-space: nowrap;
}
.wm-en {
    font-family: 'Liberation Sans', sans-serif;
    font-size: 10px;
    letter-spacing: 1.1px;
    white-space: nowrap;
}
.tabs {
    height: 4px;
    flex: none;
    background-color: #f0f0f0;
    display: flex;
    overflow: hidden;
    font-family: 'Noto Sans CJK SC', sans-serif;
    font-size: 9px;
    line-height: 9px;
    color: #222;
    gap: 8px;
}
.tabnav {
    background-color: #fff;
    width: 50px;
    display: flex;
    justify-content: space-around;
}
.tabnav b {
    width: 5px;
    height: 4px;
    background-color: #555;
    clip-path: polygon(0 100%, 100% 100%, 50% 0);
}
.tablist {
    white-space: nowrap;
}
```
